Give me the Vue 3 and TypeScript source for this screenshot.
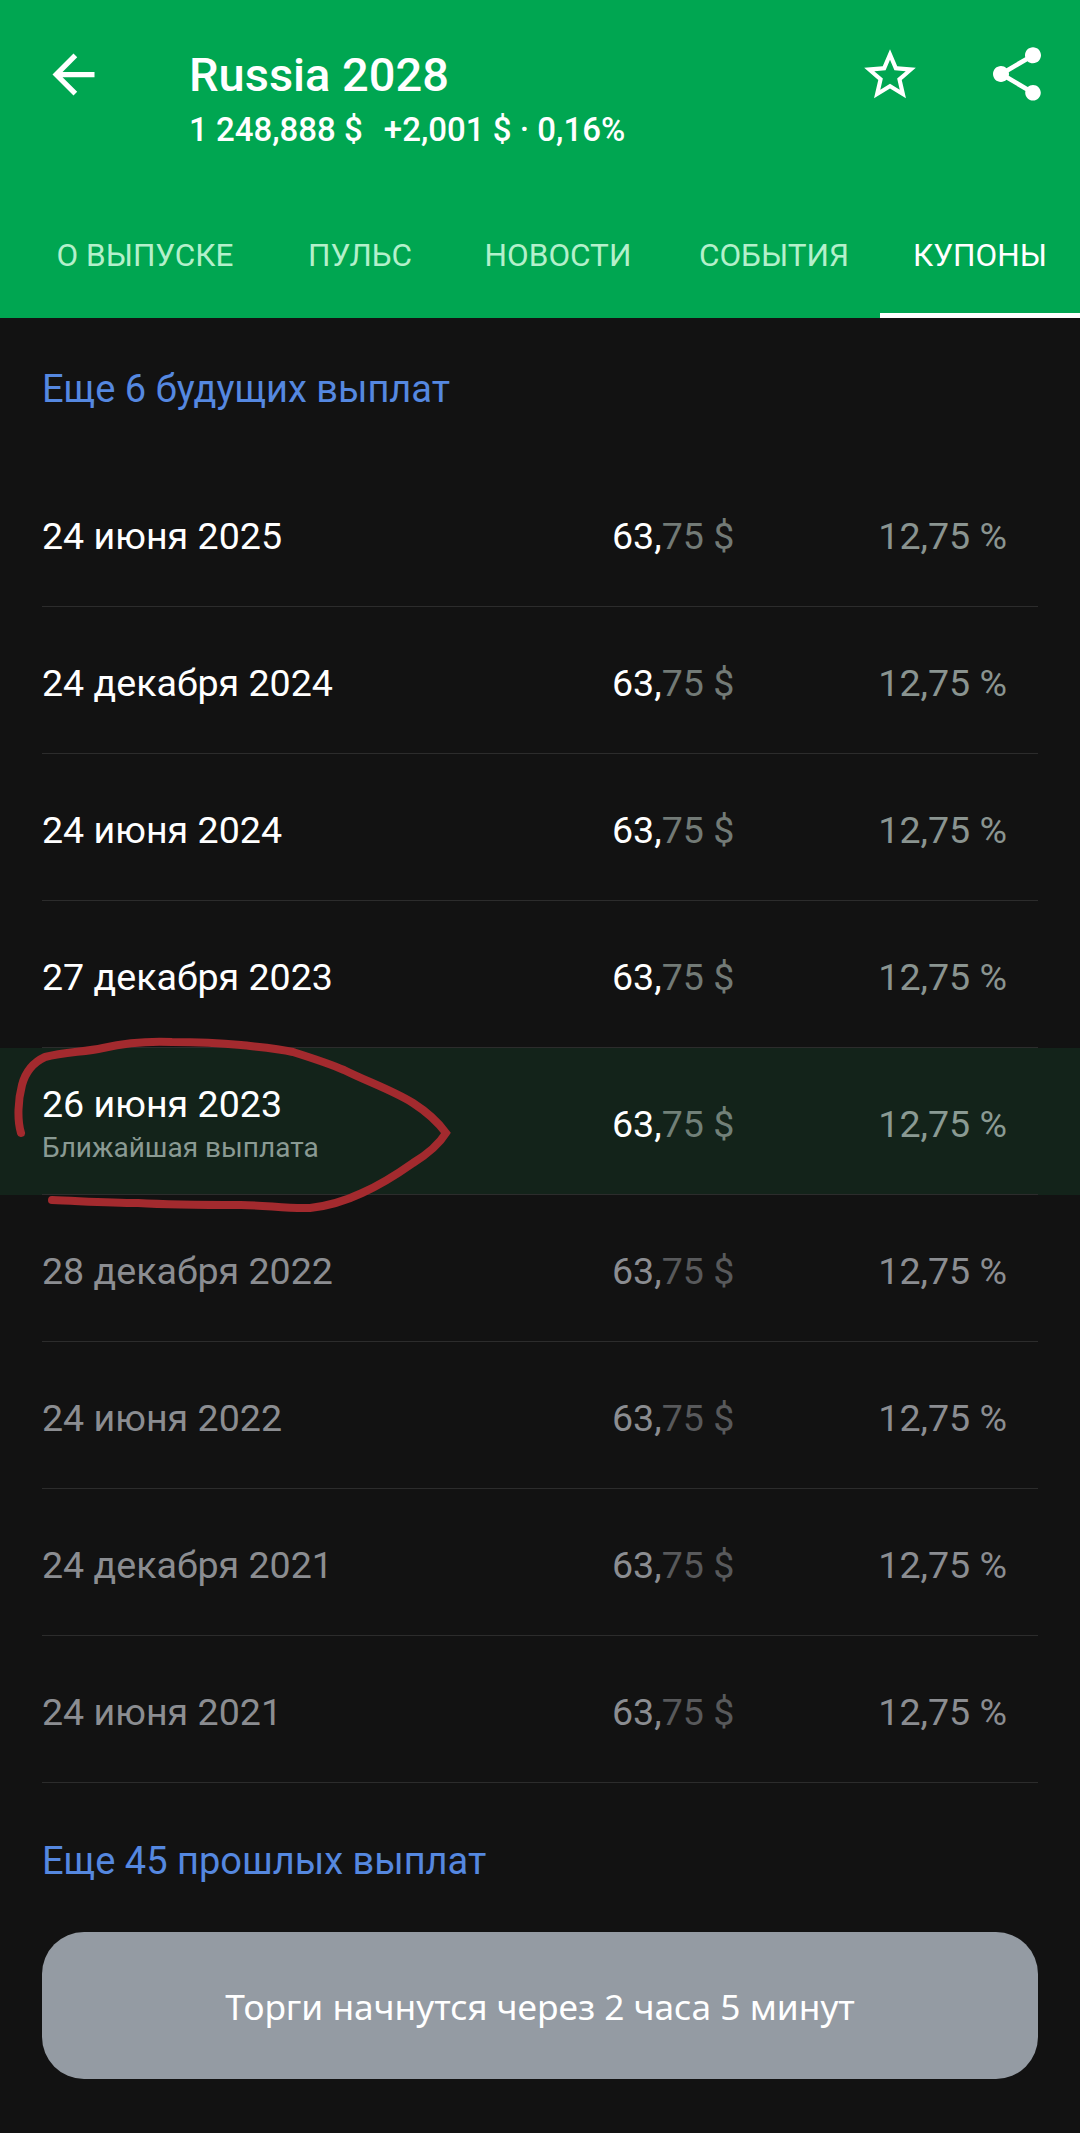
<template>
  <div class="page">
    <header class="header">
      <div class="top-bar">
        <svg class="back-icon" viewBox="0 0 24 24" fill="#fff">
          <path d="M20 11H7.83l5.59-5.59L12 4l-8 8 8 8 1.41-1.41L7.83 13H20v-2z" />
        </svg>
        <div class="title-block">
          <div class="title">Russia 2028</div>
          <div class="subtitle">1 248,888 $<span class="change">+2,001 $ · 0,16%</span></div>
        </div>
        <svg class="star-icon" viewBox="0 0 24 24" fill="#fff">
          <path d="M22 9.24l-7.19-.62L12 2 9.19 8.63 2 9.24l5.46 4.73L5.82 21 12 17.27 18.18 21l-1.63-7.03L22 9.24zM12 15.4l-3.76 2.27 1-4.28-3.32-2.88 4.38-.38L12 6.1l1.71 4.04 4.38.38-3.32 2.88 1 4.28L12 15.4z" />
        </svg>
        <svg class="share-icon" viewBox="0 0 24 24" fill="#fff">
          <path d="M18 16.08c-.76 0-1.44.3-1.96.77L8.91 12.7c.05-.23.09-.46.09-.7s-.04-.47-.09-.7l7.05-4.11c.54.5 1.25.81 2.04.81 1.66 0 3-1.34 3-3s-1.34-3-3-3-3 1.34-3 3c0 .24.04.47.09.7L8.04 9.81C7.5 9.31 6.79 9 6 9c-1.66 0-3 1.34-3 3s1.34 3 3 3c.79 0 1.5-.31 2.04-.81l7.12 4.16c-.05.21-.08.43-.08.65 0 1.61 1.31 2.92 2.92 2.92 1.61 0 2.92-1.31 2.92-2.92s-1.31-2.92-2.92-2.92z" />
        </svg>
      </div>
      <nav class="tabs">
        <div v-for="tab in tabs" :key="tab" class="tab" :class="{ active: tab === 'КУПОНЫ' }">{{ tab }}</div>
      </nav>
    </header>

    <div class="link link-top">Еще 6 будущих выплат</div>

    <div
      v-for="row in rows"
      :key="row.date"
      class="row"
      :class="{ past: row.state === 'past', next: row.state === 'next' }"
    >
      <div class="row-inner">
        <div class="date-cell">
          <div class="date">{{ row.date }}</div>
          <div v-if="row.state === 'next'" class="next-label">Ближайшая выплата</div>
        </div>
        <div class="amount"><span class="whole">63,</span><span class="fraction">75 $</span></div>
        <div class="percent">12,75 %</div>
      </div>
    </div>

    <div class="link link-bottom">Еще 45 прошлых выплат</div>

    <button class="trade-btn" type="button">Торги начнутся через 2 часа 5 минут</button>

    <!-- hand drawn mark over the nearest payment -->
    <svg class="scribble" viewBox="0 0 1080 2133" fill="none">
      <path
        d="M21 1133 C17 1120 18 1100 22 1085 C26 1070 34 1062 45 1057 C65 1052 85 1052 103 1048 C125 1043 150 1041 172 1042 C195 1042 220 1043 241 1045 C258 1047 276 1048 293 1052 C312 1058 328 1063 344 1070 C368 1082 392 1090 413 1103 C427 1112 438 1122 446 1133 C438 1146 426 1155 413 1163 C396 1175 380 1185 362 1193 C345 1201 328 1206 310 1208 C288 1209 264 1205 241 1205 C205 1205 172 1205 138 1203 C108 1203 80 1201 52 1200"
        stroke="#a32a2e"
        stroke-width="8"
        stroke-linecap="round"
      />
    </svg>
  </div>
</template>

<script setup lang="ts">
type RowState = 'future' | 'next' | 'past'

interface CouponRow {
  date: string
  state: RowState
}

const tabs = ['О ВЫПУСКЕ', 'ПУЛЬС', 'НОВОСТИ', 'СОБЫТИЯ', 'КУПОНЫ']

const rows: CouponRow[] = [
  { date: '24 июня 2025', state: 'future' },
  { date: '24 декабря 2024', state: 'future' },
  { date: '24 июня 2024', state: 'future' },
  { date: '27 декабря 2023', state: 'future' },
  { date: '26 июня 2023', state: 'next' },
  { date: '28 декабря 2022', state: 'past' },
  { date: '24 июня 2022', state: 'past' },
  { date: '24 декабря 2021', state: 'past' },
  { date: '24 июня 2021', state: 'past' },
]
</script>

<style>
body {
  background: #121212;
}
</style>

<style scoped>
.page {
  position: relative;
  width: 1080px;
  height: 2133px;
  overflow: hidden;
  background: #121212;
  font-family: Roboto, "Noto Sans", sans-serif;
  color: #fff;
}

.header {
  height: 318px;
  box-sizing: border-box;
  background: #00a651;
  display: flex;
  flex-direction: column;
}

.top-bar {
  height: 198px;
  display: flex;
  align-items: flex-start;
}

.back-icon {
  width: 63px;
  height: 63px;
  margin: 43px 0 0 42px;
  flex: none;
}

.title-block {
  margin: 49px 0 0 84px;
  flex: 1;
}

.title {
  font-size: 47px;
  line-height: 52px;
  font-weight: 500;
}

.subtitle {
  font-size: 33px;
  line-height: 40px;
  font-weight: 500;
  margin-top: 9px;
  white-space: nowrap;
}

.change {
  margin-left: 21px;
}

.star-icon {
  width: 62px;
  height: 62px;
  margin: 44px 0 0 0;
  flex: none;
}

.share-icon {
  width: 64px;
  height: 64px;
  margin: 42px 31px 0 64px;
  flex: none;
}

.tabs {
  flex: 1;
  display: grid;
  grid-template-columns: 254px 176px 220px 212px 200px;
  padding-left: 18px;
}

.tab {
  display: flex;
  align-items: center;
  justify-content: center;
  font-size: 31.5px;
  color: #b4f0cb;
  white-space: nowrap;
  box-sizing: border-box;
  border-bottom: 5px solid transparent;
}

.tab.active {
  color: #fff;
  border-bottom-color: #fff;
}

.link {
  padding: 0 42px;
  font-size: 38px;
  color: #5588e0;
}

.link-top {
  height: 142px;
  display: flex;
  align-items: center;
}

.link-bottom {
  height: 149px;
  display: flex;
  align-items: center;
  padding-top: 7px;
  box-sizing: border-box;
}

.row {
  height: 147px;
  box-sizing: border-box;
  padding: 0 42px;
}

.row.next {
  background: #13231a;
}

.row-inner {
  height: 100%;
  box-sizing: border-box;
  display: grid;
  grid-template-columns: 570px 1fr auto;
  align-items: center;
  padding: 5px 31px 0 0;
  border-bottom: 1px solid #2c2c2c;
  font-size: 37.6px;
}

.date-cell {
  white-space: nowrap;
}

.date {
  line-height: 44px;
}

.next-label {
  font-size: 28px;
  line-height: 36px;
  margin-top: 4px;
  color: #8a9a93;
}

.fraction {
  color: #727a76;
}

.percent {
  color: #8a9490;
}

.row.next .fraction {
  color: #718078;
}

.row.next .percent {
  color: #8a9a93;
}

.row.past .date,
.row.past .whole,
.row.past .percent {
  color: #8b8d91;
}

.row.past .fraction {
  color: #58595b;
}

.trade-btn {
  display: block;
  width: 996px;
  height: 147px;
  margin: 0 42px;
  border: none;
  border-radius: 42px;
  background: #949ba3;
  color: #fff;
  font-family: "Noto Sans", Roboto, sans-serif;
  font-size: 35.3px;
}

.scribble {
  position: absolute;
  top: 0;
  left: 0;
  width: 1080px;
  height: 2133px;
  pointer-events: none;
}
</style>
